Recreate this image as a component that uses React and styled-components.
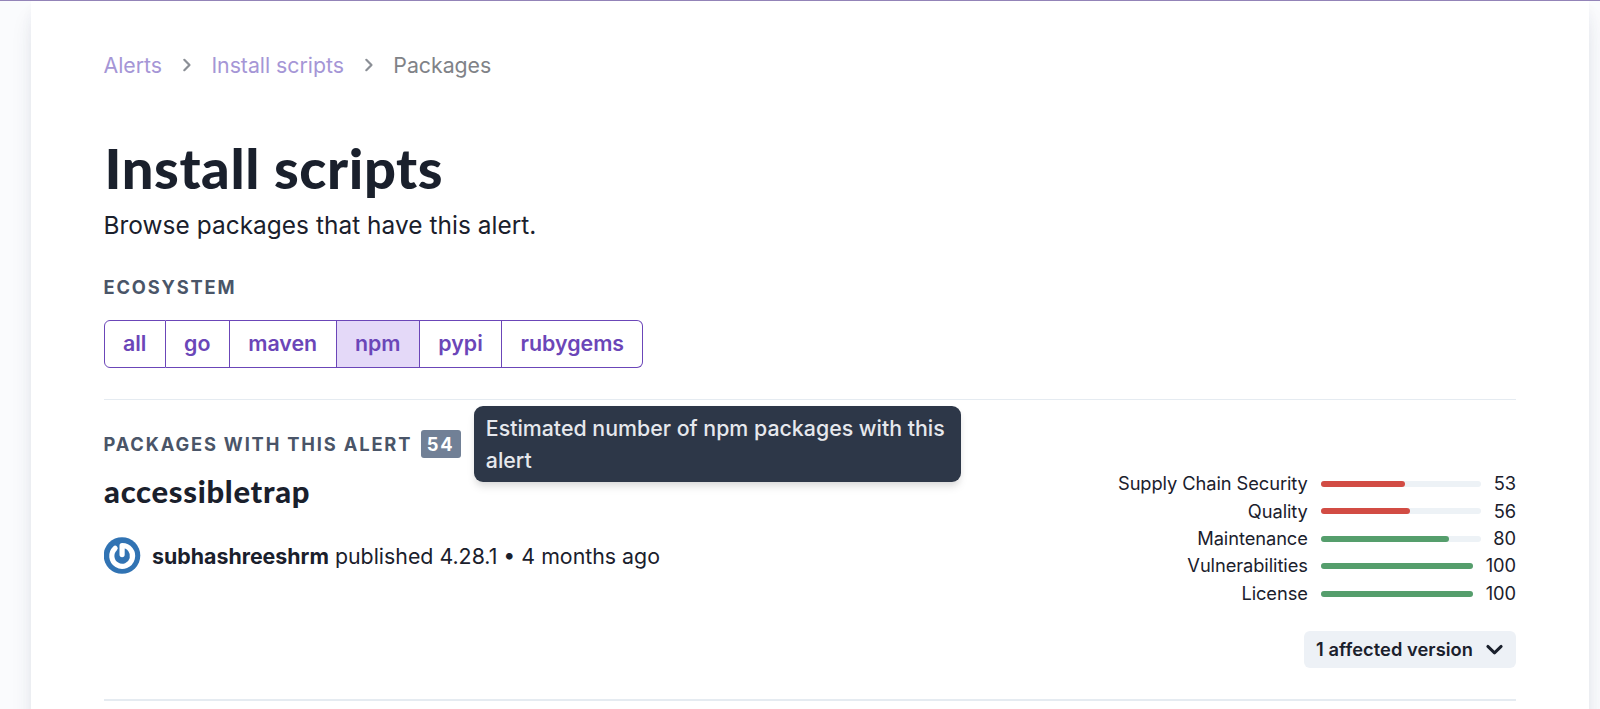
import React from 'react'
import styled, { createGlobalStyle } from 'styled-components';

const ecosystems = ['all', 'go', 'maven', 'npm', 'pypi', 'rubygems'];

const scores = [
  { label: 'Supply Chain Security', value: 53 },
  { label: 'Quality', value: 56 },
  { label: 'Maintenance', value: 80 },
  { label: 'Vulnerabilities', value: 100 },
  { label: 'License', value: 100 },
];

const Chevron = ({ size, weight, down }) => (
  <svg width={size} height={size} viewBox="0 0 16 16" fill="none" stroke="currentColor"
    strokeWidth={weight} strokeLinecap="round" strokeLinejoin="round">
    <path d={down ? 'M2.4 5.4L8 10.8l5.6-5.4' : 'M5.3 2.8L10.5 8l-5.2 5.2'} />
  </svg>
)

const Gravatar = () => (
  <svg width="37" height="37" viewBox="0 0 37 37" fill="none">
    <circle cx="18" cy="18.5" r="18.3" fill="#3173b3" />
    <path d="M11.1 11.3A10.4 10.4 0 1 0 18.1 8.5V17.6" stroke="#fff" strokeWidth="5.2"
      strokeLinecap="round" strokeLinejoin="round" />
  </svg>
)

export default function App() {
  return (
    <>
      <GlobalStyle />
      <Page>
        <Panel>
          <Breadcrumb>
            <Crumb href="#">Alerts</Crumb>
            <Chevron size={16} weight={2.2} />
            <Crumb href="#">Install scripts</Crumb>
            <Chevron size={16} weight={2.2} />
            <span>Packages</span>
          </Breadcrumb>
          <Title>Install scripts</Title>
          <Subtitle>Browse packages that have this alert.</Subtitle>
          <Overline>Ecosystem</Overline>
          <ButtonGroup>
            {ecosystems.map(name => (
              <EcosystemButton key={name} $active={name === 'npm'}>{name}</EcosystemButton>
            ))}
          </ButtonGroup>
          <Divider />
          <ListHeader>
            <Overline as="h3">Packages with this alert</Overline>
            <Badge>
              54
              <Tooltip>Estimated number of npm packages with this alert</Tooltip>
            </Badge>
          </ListHeader>
          <PackageRow>
            <div>
              <PackageName>accessibletrap</PackageName>
              <Published>
                <Gravatar />
                <p><b>subhashreeshrm</b> published 4.28.1 • 4 months ago</p>
              </Published>
            </div>
            <PackageSide>
              {scores.map(({ label, value }) => (
                <Score key={label}>
                  <span>{label}</span>
                  <Meter>
                    <Track><Fill $low={value < 60} style={{ width: `${value}%` }} /></Track>
                    <ScoreValue>{value}</ScoreValue>
                  </Meter>
                </Score>
              ))}
              <VersionButton>
                1 affected version
                <Chevron size={19} weight={2.5} down />
              </VersionButton>
            </PackageSide>
          </PackageRow>
          <Divider $thick />
        </Panel>
      </Page>
    </>
  )
}

const GlobalStyle = createGlobalStyle`
*{
  box-sizing:border-box;
  margin:0;
}
body{
  overflow:hidden;
  color:#1a202c;
  font-family:Inter, sans-serif;
}
svg{
  display:block;
  flex:none;
}
`;

const Page = styled.div`
height:709px;
overflow:hidden;
padding:0 11px 0 30.5px;
border-top:1px solid #9384b8;
background:#fafbfd;
`;

const Panel = styled.main`
height:760px;
padding:48px 73px 0;
background:#fff;
box-shadow:0 15px 23px -4px rgba(45,55,90,.12), 0 6px 14px -3px rgba(45,55,90,.06);
`;

const Breadcrumb = styled.nav`
display:flex;
align-items:center;
height:32px;
gap:16.7px;
color:#808287;
font-size:21.3px;
letter-spacing:-0.02px;

svg{
  color:#8b8f96;
}
`;

const Crumb = styled.a`
color:#a596d6;
text-decoration:none;
`;

const Title = styled.h1`
margin:53px 0 0 1px;
font-family:Lato, sans-serif;
font-size:56px;
font-weight:900;
line-height:67px;
letter-spacing:0.6px;
`;

const Subtitle = styled.p`
margin-top:6px;
font-size:24.4px;
line-height:37px;
letter-spacing:0.05px;
`;

const Overline = styled.h2`
color:#4a5568;
font-size:18.3px;
font-weight:700;
line-height:28px;
letter-spacing:1.83px;
text-transform:uppercase;

${Subtitle} + &{
  margin-top:29px;
}
`;

const ButtonGroup = styled.div`
display:flex;
width:max-content;
height:48px;
margin:19px 0 31px;
`;

const EcosystemButton = styled.button`
padding:0 18.4px 2px;
border:1.5px solid #6b46b8;
border-left-width:0;
background:${props => (props.$active ? '#e4d9f8' : 'transparent')};
color:#6b46b8;
font:600 21.35px Inter, sans-serif;

&:first-child{
  border-left-width:1.5px;
  border-radius:6px 0 0 6px;
}
&:last-child{
  border-radius:0 6px 6px 0;
}
`;

const Divider = styled.hr`
height:${props => (props.$thick ? '2px' : '1px')};
border:0;
background:#e5ebf1;
`;

const ListHeader = styled.div`
display:flex;
align-items:center;
gap:8.6px;
margin-top:30px;
`;

const Badge = styled.span`
position:relative;
padding:0 6px;
border-radius:3px;
background:#718096;
color:#fff;
font-size:18.3px;
font-weight:700;
line-height:28px;
letter-spacing:1.83px;
`;

const Tooltip = styled.span`
position:absolute;
left:53px;
top:-24px;
width:487px;
height:76px;
padding:6px 12px;
border-radius:9px;
background:#2d3748;
box-shadow:0 6px 9px -1px rgba(0,0,0,.1), 0 3px 6px -1px rgba(0,0,0,.06);
color:#e6e8ed;
font-size:21.35px;
font-weight:500;
line-height:32px;
letter-spacing:0;
`;

const PackageRow = styled.section`
display:flex;
justify-content:space-between;
height:241px;
`;

const PackageName = styled.h3`
margin:15px 0 0 .6px;
font-family:Lato, sans-serif;
font-size:31px;
font-weight:900;
line-height:37px;
letter-spacing:0.7px;
`;

const Published = styled.div`
display:flex;
align-items:center;
gap:11.6px;
margin-top:27px;
font-size:21.35px;
`;

const PackageSide = styled.div`
display:flex;
flex-direction:column;
align-items:flex-end;
padding-top:12.2px;
`;

const Score = styled.div`
display:flex;
align-items:center;
gap:12.7px;
font-size:18.3px;
line-height:27.4px;
letter-spacing:-0.08px;
`;

const Meter = styled.div`
display:flex;
align-items:center;
gap:12.7px;
width:195.5px;
`;

const Track = styled.div`
flex:1;
border-radius:3px;
background:#edf2f6;
`;

const Fill = styled.div`
height:6px;
border-radius:3px;
background:${props => (props.$low ? '#d24c44' : '#559e6c')};
`;

const ScoreValue = styled.span`
min-width:22.8px;
text-align:right;
`;

const VersionButton = styled.button`
display:flex;
align-items:center;
gap:12px;
height:37px;
margin-top:24px;
padding:0 12px 1px;
border:0;
border-radius:6px;
background:#edf1f6;
color:#1a202c;
font:600 18.3px Inter, sans-serif;
letter-spacing:0.05px;
`;
